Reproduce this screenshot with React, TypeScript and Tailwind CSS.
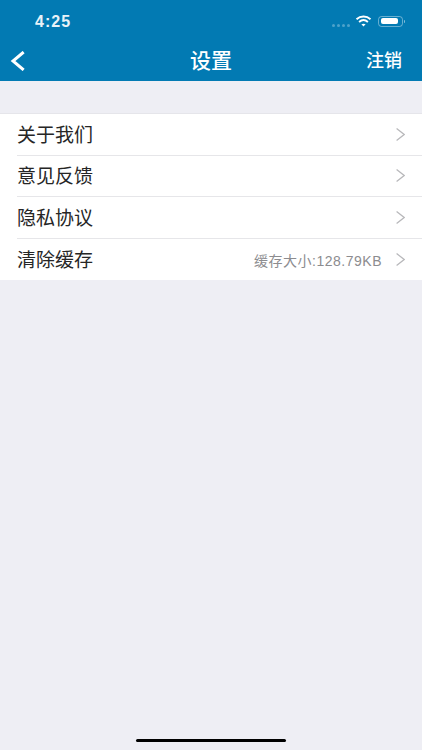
const font = { sans: "font-['Liberation_Sans','Noto_Sans_CJK_SC',sans-serif]" };

const rows = [
	{ label: "关于我们" },
	{ label: "意见反馈" },
	{ label: "隐私协议" },
	{ label: "清除缓存", extra: "缓存大小:128.79KB" },
];

const StatusBar = () => (
	<div className="flex h-[41px] items-start justify-between pl-[35px] pr-[17px] pt-[12px]">
		<span className="text-[16px] leading-[20px] font-bold tracking-[1px] text-[#e8f2f8]">
			4:25
		</span>
		<div className="flex items-center pt-[3px]">
			<div className="mr-[5px] mt-[8px] flex gap-[2px]">
				<span className="h-[3px] w-[3px] rounded-full bg-white/30" />
				<span className="h-[3px] w-[3px] rounded-full bg-white/30" />
				<span className="h-[3px] w-[3px] rounded-full bg-white/30" />
				<span className="h-[3px] w-[3px] rounded-full bg-white/30" />
			</div>
			<svg width="17" height="12" viewBox="0 0 16 12" className="mr-[6px]" fill="none" stroke="white" strokeWidth="1.9">
				<path d="M1 4.200C5 .6 11 .6 15 4.200" />
				<path d="M3.600 6.900c2.600-2.200 6.200-2.200 8.800 0" />
				<path d="M8 11.600 5.900 9.300c1.200-.9 3-.9 4.200 0z" fill="white" stroke="none" />
			</svg>
			<div className="flex h-[11px] w-[25px] items-center rounded-[3.5px] border border-white/40 p-[1.5px]">
				<div className="h-full w-[17px] rounded-[2px] bg-white" />
			</div>
			<div className="ml-[1px] h-[3px] w-[1px] rounded-r-full bg-white/50" />
		</div>
	</div>
);

const NavBar = () => (
	<div className="relative flex h-[40px] items-center justify-between pl-[10px] pr-[20px]">
		<svg width="15" height="20" viewBox="0 0 15 20" fill="none" stroke="white" strokeWidth="3" strokeLinecap="square">
			<path d="M12.500 2 3 10l9.500 8" />
		</svg>
		<span className="absolute inset-x-0 text-center text-[21px] leading-[28px] font-medium text-white">
			设置
		</span>
		<span className="text-[18px] leading-[24px] font-medium text-white">注销</span>
	</div>
);

const App = () => {
	return (
		<div className={`relative flex h-[750px] w-[422px] flex-col overflow-hidden bg-[#eeeef4] ${font.sans}`}>
			<div className="bg-[#027ab3]">
				<StatusBar />
				<NavBar />
			</div>

			<div className="mt-[32px] border-t border-[#e5e5ea] bg-white">
				{rows.map((row, i) => (
					<div key={row.label} className="pl-[17px]">
						<div
							className={`flex h-[41.5px] items-center justify-between pr-[17px] pt-[3px] ${
								i < rows.length - 1 ? "border-b border-[#e6e6e9]" : ""
							}`}
						>
							<span className="text-[19px] leading-[26px] text-[#262626]">{row.label}</span>
							<div className="flex items-center">
								{row.extra && (
									<span className="mr-[14px] text-[14px] leading-[18px] tracking-[0.5px] text-[#8c8c8f]">
										{row.extra}
									</span>
								)}
								<svg width="9" height="13" viewBox="0 0 9 13" fill="none" stroke="#b8b8bb" strokeWidth="1.3" className="-mt-[3px]">
									<path d="M.6.6 8.200 6.500.6 12.400" />
								</svg>
							</div>
						</div>
					</div>
				))}
			</div>

			<div className="absolute bottom-[8px] left-[136px] h-[3px] w-[150px] rounded-full bg-black" />
		</div>
	);
};

export default App;
